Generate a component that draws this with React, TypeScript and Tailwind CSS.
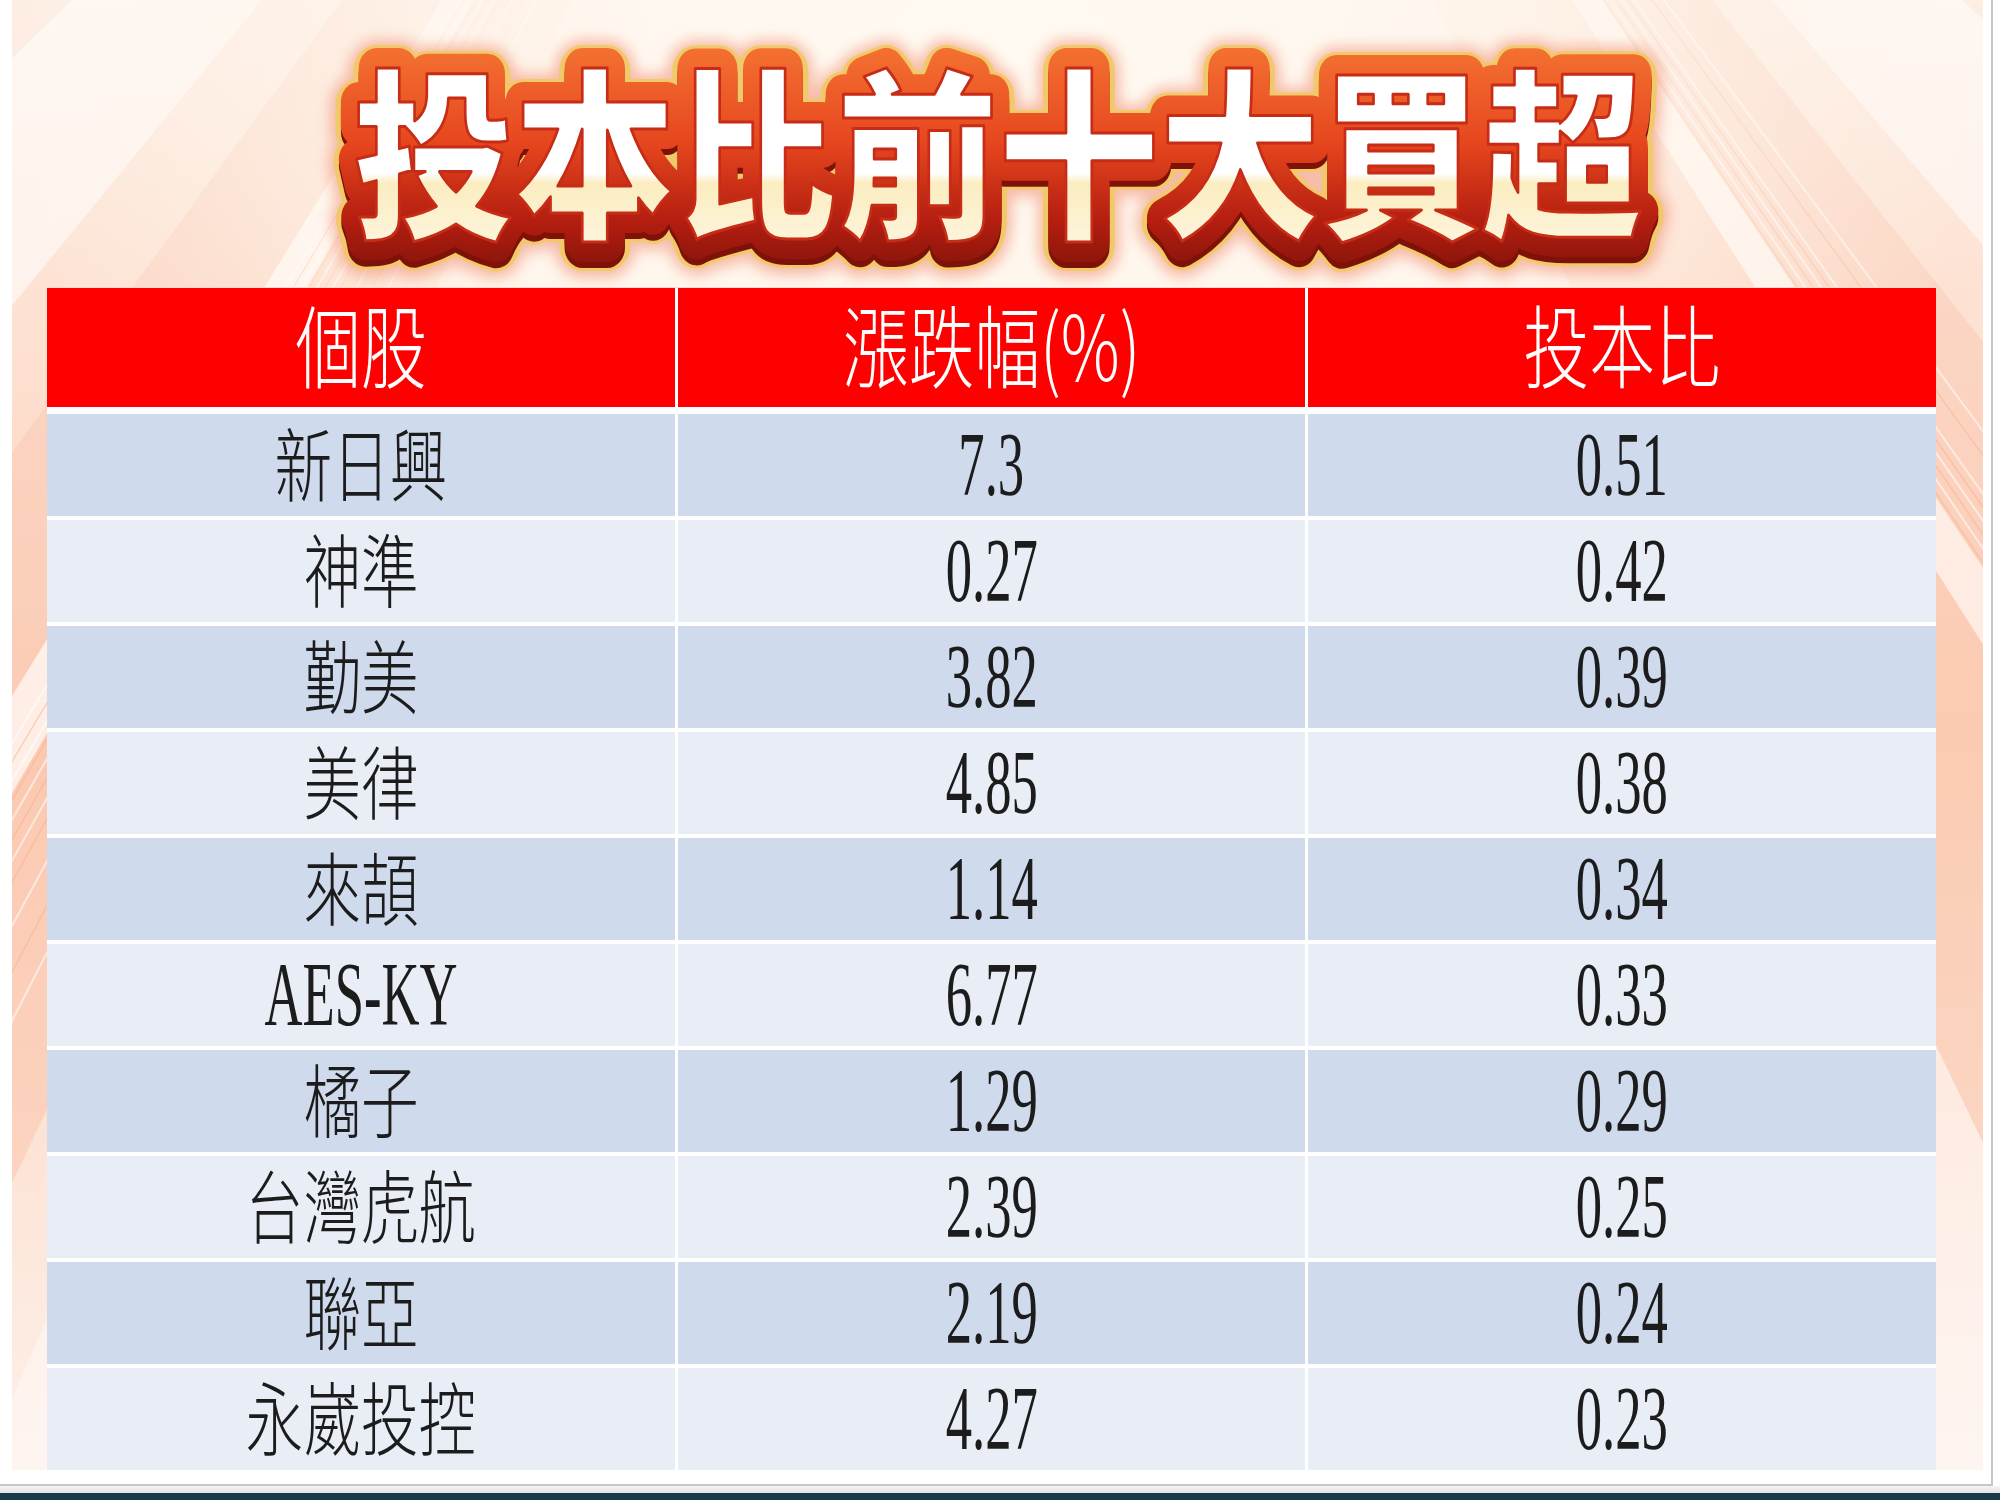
import React from 'react';

type Row = [string, string, string];

const rows: Row[] = [
  ['新日興', '7.3', '0.51'],
  ['神準', '0.27', '0.42'],
  ['勤美', '3.82', '0.39'],
  ['美律', '4.85', '0.38'],
  ['來頡', '1.14', '0.34'],
  ['AES-KY', '6.77', '0.33'],
  ['橘子', '1.29', '0.29'],
  ['台灣虎航', '2.39', '0.25'],
  ['聯亞', '2.19', '0.24'],
  ['永崴投控', '4.27', '0.23'],
];

// sunburst rays of the background art
const AX = 986;
const AY = -900;
const H = 1470;
const at = (x0: number, y: number) => AX + ((x0 - AX) * (y - AY)) / -AY;
const band = (a: number, b: number) => `${AX},${AY} ${at(a, H)},${H} ${at(b, H)},${H}`;

const bands: { a: number; b: number; fill: string; op: number }[] = [
  { a: -600, b: -100, fill: '#ffffff', op: 0.5 },
  { a: 60, b: 250, fill: '#ffffff', op: 0.55 },
  { a: 330, b: 430, fill: '#f8b596', op: 0.25 },
  { a: 430, b: 462, fill: '#ffffff', op: 0.6 },
  { a: 462, b: 560, fill: '#f8b596', op: 0.35 },
  { a: 600, b: 760, fill: '#ffffff', op: 0.35 },
  { a: 1260, b: 1420, fill: '#ffffff', op: 0.35 },
  { a: 1420, b: 1560, fill: '#f8b596', op: 0.3 },
  { a: 1560, b: 1590, fill: '#ffffff', op: 0.5 },
  { a: 1590, b: 1700, fill: '#f8b596', op: 0.25 },
  { a: 1760, b: 1950, fill: '#ffffff', op: 0.5 },
  { a: 2150, b: 2600, fill: '#ffffff', op: 0.45 },
];

const stripes = [446, 452, 458, 464, 470, 476, 482, 488, 500, 512, 524, 1592, 1598, 1604, 1610, 1616, 1622, 1640, 1652];

function Backdrop() {
  return (
    <svg className="absolute inset-0 h-full w-full" viewBox={`0 0 1971 ${H}`} preserveAspectRatio="none">
      <defs>
        <linearGradient id="bgBase" x1="0" y1="0" x2="0" y2="1">
          <stop offset="0" stopColor="#fdeee4" />
          <stop offset="0.2" stopColor="#fde2d3" />
          <stop offset="0.5" stopColor="#fcd3be" />
          <stop offset="1" stopColor="#fdf0e9" />
        </linearGradient>
        <radialGradient id="bgGlow" cx="0.5" cy="0.06" r="0.5">
          <stop offset="0" stopColor="#fffaf2" stopOpacity="1" />
          <stop offset="0.55" stopColor="#fff7ee" stopOpacity="0.85" />
          <stop offset="1" stopColor="#fff6ec" stopOpacity="0" />
        </radialGradient>
      </defs>
      <rect width="1971" height={H} fill="url(#bgBase)" />
      {bands.map((b, i) => (
        <polygon key={i} points={band(b.a, b.b)} fill={b.fill} opacity={b.op} />
      ))}
      {stripes.map((x0, i) => (
        <line
          key={x0}
          x1={AX}
          y1={AY}
          x2={at(x0, H)}
          y2={H}
          stroke={i % 2 ? '#f6ad8c' : '#ffffff'}
          strokeWidth={i % 2 ? 1.2 : 2}
          opacity={0.55}
        />
      ))}
      <rect width="1971" height={H} fill="url(#bgGlow)" />
    </svg>
  );
}

function Title() {
  return (
    <svg width="1500" height="287" viewBox="0 0 1500 287">
      <defs>
        <linearGradient id="redGrad" gradientUnits="userSpaceOnUse" x1="0" y1="45" x2="0" y2="265">
          <stop offset="0" stopColor="#f47232" />
          <stop offset="0.45" stopColor="#e6461e" />
          <stop offset="0.8" stopColor="#b41e10" />
          <stop offset="1" stopColor="#8c150b" />
        </linearGradient>
        <linearGradient id="whiteGrad" gradientUnits="userSpaceOnUse" x1="0" y1="73" x2="0" y2="240">
          <stop offset="0" stopColor="#ffffff" />
          <stop offset="0.6" stopColor="#ffffff" />
          <stop offset="0.66" stopColor="#fbedc0" />
          <stop offset="1" stopColor="#fdf4da" />
        </linearGradient>
        <filter id="halo" x="-10%" y="-40%" width="120%" height="180%">
          <feGaussianBlur stdDeviation="7" />
        </filter>
        <text
          id="titleText"
          x={750}
          y={224}
          textAnchor="middle"
          fontSize={182}
          fontWeight={900}
          textLength={1290}
          lengthAdjust="spacingAndGlyphs"
          fontFamily="'Noto Sans CJK TC', 'Noto Sans CJK SC', sans-serif"
          strokeLinejoin="round"
        >
          投本比前十大買超
        </text>
      </defs>
      <use href="#titleText" y={4} fill="#ef8a6c" stroke="#ef8a6c" strokeWidth={64} opacity={0.55} filter="url(#halo)" />
      <use href="#titleText" y={3} fill="#f2c968" stroke="#f2c968" strokeWidth={52} />
      <use href="#titleText" y={6} fill="#7e1208" stroke="#7e1208" strokeWidth={40} />
      <use href="#titleText" fill="url(#redGrad)" stroke="url(#redGrad)" strokeWidth={40} />
      <use href="#titleText" fill="url(#whiteGrad)" stroke="#c62c16" strokeWidth={3} />
    </svg>
  );
}

function Cell({ text, bg }: { text: string; bg: string }) {
  const latin = /^[\x00-\x7F]+$/.test(text);
  return (
    <div className={`flex items-center justify-center ${bg}`}>
      {latin ? (
        <span className="inline-block scale-x-[0.585] font-['Liberation_Serif',serif] text-[90px] leading-none text-[#1c1c1c]">
          {text}
        </span>
      ) : (
        <span className="inline-block -translate-y-[5px] scale-x-[0.72] font-['Noto_Sans_CJK_TC',sans-serif] text-[80px] font-light leading-none text-[#1c1c1c]">
          {text}
        </span>
      )}
    </div>
  );
}

function HeadCell({ text }: { text: string }) {
  return (
    <div className="flex items-center justify-center bg-[#fe0000]">
      <span className="inline-block -translate-y-[6px] scale-x-[0.73] font-['Noto_Sans_CJK_TC',sans-serif] text-[90px] font-light leading-none text-white">
        {text}
      </span>
    </div>
  );
}

export default function App() {
  return (
    <div className="flex h-[1500px] w-[2000px] flex-col overflow-hidden bg-white">
      <div className="h-[1486px] w-[1993px] border-r-2 border-b-2 border-[#c6c6c6] bg-white">
        <div className="relative ml-[12px] h-[1470px] w-[1971px]">
          <Backdrop />
          <div className="relative flex flex-col">
            <div className="flex h-[287px] justify-center">
              <Title />
            </div>
            <div className="ml-[35px] flex w-[1889px] flex-col bg-white">
              <div className="grid h-[120px] grid-cols-3 gap-x-[3px] border-t border-[#ffd9d0]">
                <HeadCell text="個股" />
                <HeadCell text="漲跌幅(%)" />
                <HeadCell text="投本比" />
              </div>
              <div className="flex flex-col gap-[4px] pt-[7px]">
                {rows.map((r, i) => {
                  const bg = i % 2 === 0 ? 'bg-[#cfdbed]' : 'bg-[#e8edf6]';
                  return (
                    <div key={r[0]} className="grid h-[102px] grid-cols-3 gap-x-[3px]">
                      <Cell text={r[0]} bg={bg} />
                      <Cell text={r[1]} bg={bg} />
                      <Cell text={r[2]} bg={bg} />
                    </div>
                  );
                })}
              </div>
            </div>
          </div>
        </div>
      </div>
      <div className="h-[7px] bg-gradient-to-b from-[#f4f4f4] to-[#e2e2e2]" />
      <div className="h-[7px] bg-[#173b47]" />
    </div>
  );
}
